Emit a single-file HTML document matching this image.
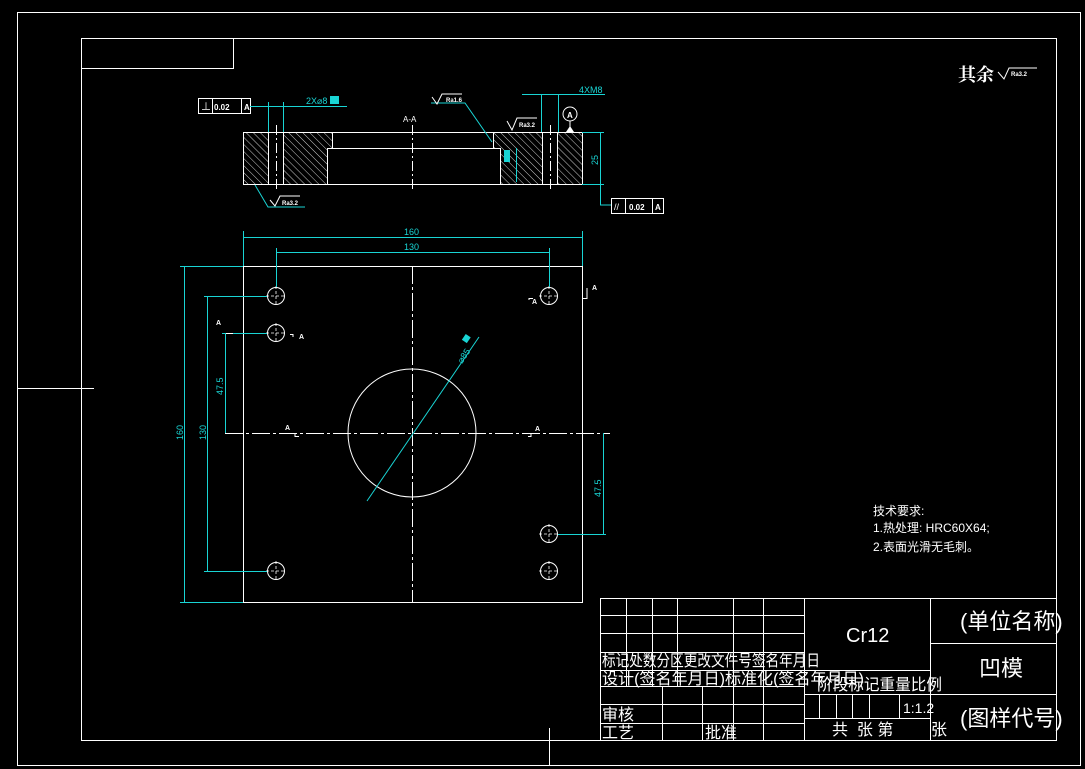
<!DOCTYPE html>
<html><head><meta charset="utf-8"><style>
html,body{margin:0;padding:0;background:#000;}
svg{display:block}
text{font-family:"Liberation Sans","Noto Sans CJK SC",sans-serif;}
.w{stroke:#fff;stroke-width:1;fill:none}
.c{stroke:#19d4d4;stroke-width:1;fill:none}
.ct{fill:#19d4d4;font-size:9px}
.wt{fill:#fff}
.cj{font-family:"Liberation Mono","Noto Serif CJK SC","Noto Sans CJK SC",monospace;fill:#fff}
</style></head><body>
<svg width="1085" height="769" viewBox="0 0 1085 769" xmlns="http://www.w3.org/2000/svg">
<defs>
<pattern id="h" patternUnits="userSpaceOnUse" width="5" height="5" patternTransform="rotate(-45)">
<line x1="0" y1="0" x2="0" y2="5" stroke="#fff" stroke-width="0.8"/>
</pattern>
</defs>
<rect x="0" y="0" width="1085" height="769" fill="#000"/>
<rect class="w" x="17.5" y="12.5" width="1063" height="753"/>
<rect class="w" x="81.5" y="38.5" width="975" height="702"/>
<rect class="w" x="81.5" y="38.5" width="152" height="30"/>
<line class="w" x1="17" y1="388.5" x2="94" y2="388.5"/>
<line class="w" x1="549.5" y1="728" x2="549.5" y2="766"/>

<rect x="243" y="132" width="25" height="52" fill="url(#h)"/>
<path d="M283 132H332V148H327V184H283Z" fill="url(#h)"/>
<path d="M493 132H542V184H500V148H493Z" fill="url(#h)"/>
<rect x="558" y="132" width="24" height="52" fill="url(#h)"/>
<rect class="w" x="243.5" y="132.5" width="339" height="52"/>
<line class="w" x1="268.5" y1="132" x2="268.5" y2="184"/>
<line class="w" x1="283.5" y1="132" x2="283.5" y2="184"/>
<path class="w" d="M332.5 132V148.5H327.5V184M327 148.5H500.5V184M493.5 132V148.5"/>
<rect class="w" x="542.5" y="132.5" width="15" height="52" stroke-width="2"/>
<line class="w" x1="412.5" y1="125" x2="412.5" y2="190" stroke-dasharray="10,3,2,3"/>
<line class="w" x1="276.5" y1="125" x2="276.5" y2="190" stroke-dasharray="10,3,2,3"/>
<line class="w" x1="550.5" y1="125" x2="550.5" y2="190" stroke-dasharray="10,3,2,3"/>
<text x="403" y="122" class="wt" font-size="8">A-A</text>
<rect class="w" x="198.5" y="98.5" width="52" height="15"/>
<line class="w" x1="212.5" y1="98" x2="212.5" y2="113"/><line class="w" x1="241.5" y1="98" x2="241.5" y2="113"/>
<text x="201" y="110" class="wt" font-size="10">⊥</text><text x="214" y="110" class="wt" font-size="8" font-weight="bold">0.02</text><text x="244" y="110" class="wt" font-size="8" font-weight="bold">A</text>
<line class="c" x1="250" y1="106.5" x2="347" y2="106.5"/>
<line class="c" x1="268.5" y1="102" x2="268.5" y2="132"/><line class="c" x1="283.5" y1="102" x2="283.5" y2="132"/>
<text x="306" y="104" class="ct">2X⌀8</text><rect x="330" y="96" width="9" height="8" fill="#19d4d4"/>
<path class="c" d="M255 185L268 207H305"/><path class="w" d="M270 200L275 206L280 196H300"/><text x="282" y="205" class="wt" font-size="6" font-weight="bold">Ra3.2</text>
<path class="c" d="M431 103H465L492 142"/><path class="w" d="M432 97L437 104L442 94H462"/><text x="446" y="102" class="wt" font-size="6" font-weight="bold">Ra1.6</text>
<path class="w" d="M507 121L512 130L517 118H537"/><text x="519" y="127" class="wt" font-size="6" font-weight="bold">Ra3.2</text>
<rect x="504" y="150" width="6" height="12" fill="#19d4d4"/><line class="c" x1="516.5" y1="148" x2="516.5" y2="182"/>
<line class="c" x1="522" y1="94.5" x2="605" y2="94.5"/>
<line class="c" x1="541.5" y1="94" x2="541.5" y2="132"/><line class="c" x1="558.5" y1="94" x2="558.5" y2="132"/>
<text x="579" y="93" class="ct">4XM8</text>
<circle class="w" cx="570" cy="114" r="7"/><text x="567" y="118" class="wt" font-size="8" font-weight="bold">A</text>
<line class="w" x1="570" y1="121" x2="570" y2="127"/><path d="M566 132L570 126L574 132Z" fill="#fff"/>
<line class="c" x1="582" y1="132.5" x2="604" y2="132.5"/><line class="c" x1="582" y1="184.5" x2="604" y2="184.5"/>
<path class="c" d="M600.5 132V205H611"/>
<text x="0" y="0" class="ct" transform="translate(598 165) rotate(-90)">25</text>
<rect class="w" x="611.5" y="198.5" width="52" height="15"/>
<line class="w" x1="625.5" y1="198" x2="625.5" y2="213"/><line class="w" x1="652.5" y1="198" x2="652.5" y2="213"/>
<text x="614" y="210" class="wt" font-size="9">//</text><text x="629" y="210" class="wt" font-size="8" font-weight="bold">0.02</text><text x="655" y="210" class="wt" font-size="8" font-weight="bold">A</text>

<rect class="w" x="243.5" y="266.5" width="339" height="336"/>
<line class="w" x1="412.5" y1="266" x2="412.5" y2="602" stroke-dasharray="18,3,3,3"/>
<line class="w" x1="225" y1="433.5" x2="610" y2="433.5" stroke-dasharray="18,3,3,3"/>
<circle class="w" cx="412" cy="433" r="64"/>
<g class="w">
<circle cx="276" cy="296" r="8.5"/><circle cx="549" cy="296" r="8.5"/>
<circle cx="276" cy="333" r="8.5"/><circle cx="276" cy="571" r="8.5"/>
<circle cx="549" cy="571" r="8.5"/><circle cx="549" cy="534" r="8.5"/>
</g>
<g stroke="#fff" stroke-width="0.8" stroke-dasharray="3,2">
<path d="M266 296H286M276 286V306M539 296H559M549 286V306M266 333H286M276 323V343M266 571H286M276 561V581M539 571H559M549 561V581M539 534H559M549 524V544"/>
</g>
<line class="c" x1="243.5" y1="231" x2="243.5" y2="266"/><line class="c" x1="582.5" y1="231" x2="582.5" y2="266"/>
<line class="c" x1="243" y1="237.5" x2="582" y2="237.5"/><text x="404" y="235" class="ct">160</text>
<line class="c" x1="276.5" y1="248" x2="276.5" y2="287"/><line class="c" x1="549.5" y1="248" x2="549.5" y2="287"/>
<line class="c" x1="276" y1="252.5" x2="549" y2="252.5"/><text x="404" y="250" class="ct">130</text>
<line class="c" x1="180" y1="266.5" x2="243" y2="266.5"/><line class="c" x1="180" y1="602.5" x2="243" y2="602.5"/>
<line class="c" x1="184.5" y1="266" x2="184.5" y2="602"/><text class="ct" transform="translate(183 440) rotate(-90)">160</text>
<line class="c" x1="204" y1="296.5" x2="267" y2="296.5"/><line class="c" x1="204" y1="571.5" x2="267" y2="571.5"/>
<line class="c" x1="207.5" y1="296" x2="207.5" y2="571"/><text class="ct" transform="translate(206 440) rotate(-90)">130</text>
<line class="c" x1="222" y1="333.5" x2="267" y2="333.5"/>
<line class="c" x1="225.5" y1="333" x2="225.5" y2="433"/><text class="ct" transform="translate(223 395) rotate(-90)">47.5</text>
<line class="c" x1="558" y1="534.5" x2="606" y2="534.5"/>
<line class="c" x1="603.5" y1="433" x2="603.5" y2="534"/><text class="ct" transform="translate(601 497) rotate(-90)">47.5</text>
<line class="c" x1="367" y1="501" x2="479" y2="337"/>
<text class="ct" transform="translate(462 364) rotate(-56)">⌀85</text><rect x="463" y="336" width="7" height="6" fill="#19d4d4" transform="rotate(-56 466 339)"/>
<g class="wt" font-size="7" font-weight="bold">
<text x="216" y="325">A</text><text x="299" y="339">A</text><text x="285" y="430">A</text><text x="535" y="431">A</text><text x="532" y="304">A</text><text x="592" y="290">A</text>
</g>
<path class="w" d="M226 333.5H233M290 334.5H293V337M295 433V436.5H299M528 436.5H531V433M529 300V298.5H533M583 298.5H587V288" stroke-width="1.5"/>

<text x="958" y="81" class="cj" font-size="18" font-weight="bold">其余</text>
<path class="w" d="M998 72L1004 79L1009 68H1037"/><text x="1011" y="76" class="wt" font-size="6" font-weight="bold">Ra3.2</text>
<g class="cj" font-size="12">
<text x="873" y="515">技术要求:</text>
<text x="873" y="532">1.热处理: HRC60X64;</text>
<text x="873" y="551">2.表面光滑无毛刺。</text>
</g>

<g class="w">
<rect x="600.5" y="598.5" width="456" height="142"/>
<path d="M600 615.5H804M600 633.5H804M600 652.5H804M600 670.5H930M600 686.5H804M600 704.5H804M600 723.5H804"/>
<path d="M626.5 598V686M652.5 598V686M677.5 598V686M733.5 598V740M763.5 598V740M804.5 598V740"/>
<path d="M662.5 686V740M702.5 686V740"/>
<path d="M804 694.5H930M804 718.5H930M930.5 598V740M930 643.5H1056M930 694.5H1056"/>
<path d="M819.5 694V718M836.5 694V718M852.5 694V718M869.5 694V718M899.5 694V718"/>
</g>
<g class="cj">
<text x="846" y="642" font-size="20">Cr12</text>
<text x="960" y="629" font-size="22">(单位名称)</text>
<text x="979" y="676" font-size="22">凹模</text>
<text x="960" y="726" font-size="22">(图样代号)</text>
<text x="903" y="713" font-size="14">1:1.2</text>
<g font-size="16">
<text x="602" y="666" textLength="218" lengthAdjust="spacingAndGlyphs">标记处数分区更改文件号签名年月日</text>
<text x="602" y="684" textLength="262" lengthAdjust="spacingAndGlyphs">设计(签名年月日)标准化(签名年月日)</text>
<text x="817" y="690" textLength="125" lengthAdjust="spacingAndGlyphs">阶段标记重量比例</text>
<text x="602" y="720">审核</text>
<text x="602" y="738">工艺</text>
<text x="705" y="738">批准</text>
<text x="832" y="735">共&#160;&#160;张&#160;第</text>
<text x="931" y="735">张</text>
</g>
</g>
</svg>
</body></html>
